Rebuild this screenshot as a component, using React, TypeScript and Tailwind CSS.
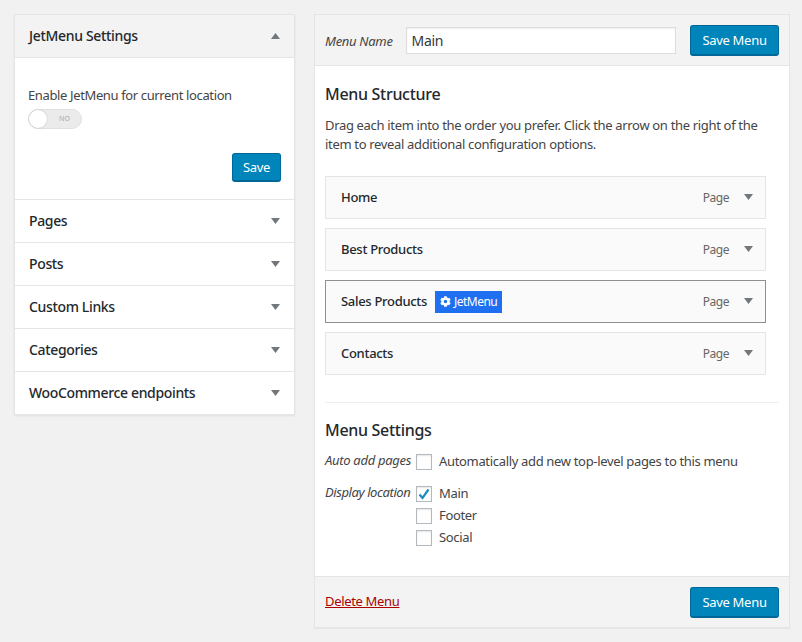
import { FaCog } from "react-icons/fa";

const FONT = "font-['Noto_Sans','Open_Sans',sans-serif]";

function Caret({ up }: { up?: boolean }) {
  return (
    <svg width="9" height="6" viewBox="0 0 9 6" className="shrink-0 fill-[#72777c]">
      <path d={up ? "M4.5 0 9 6H0Z" : "M0 0H9L4.5 6Z"} />
    </svg>
  );
}

function SaveButton({ label, className }: { label: string; className: string }) {
  return (
    <button
      type="button"
      className={`rounded-[3px] border border-b-2 border-[#006799] bg-[#0085ba] pt-[1px] text-[13px] leading-none tracking-[-0.3px] text-white ${className}`}
    >
      {label}
    </button>
  );
}

function SideRow({ label }: { label: string }) {
  return (
    <div className="flex h-[43px] items-center justify-between border-t border-[#e5e5e5] pl-[14px] pr-[14px]">
      <span className="-translate-y-px text-[14px] font-medium tracking-[-0.35px] text-[#23282d]">{label}</span>
      <Caret />
    </div>
  );
}

function MenuItem({ label, active, badge }: { label: string; active?: boolean; badge?: boolean }) {
  return (
    <div
      className={`flex h-[43px] w-[441px] items-center border bg-[#fafafa] pl-[15px] pr-[12px] ${active ? "border-[#8f8f8f]" : "border-[#e5e5e5]"}`}
    >
      <span className="text-[13px] font-medium tracking-[-0.3px] text-[#23282d]">{label}</span>
      {badge && (
        <span className="ml-[8px] flex h-[22px] w-[67px] items-center justify-center gap-[3px] bg-[#1f70f0] text-[12px] tracking-[-0.5px] text-white">
          <FaCog size={11} />
          JetMenu
        </span>
      )}
      <span className="ml-auto mr-[15px] text-[12px] tracking-[-0.45px] text-[#666]">Page</span>
      <span className="-mt-[2px]">
        <Caret />
      </span>
    </div>
  );
}

function Check({ checked }: { checked?: boolean }) {
  return (
    <span className="flex h-[16px] w-[16px] shrink-0 items-center justify-center border border-[#b4b9be] bg-white shadow-[inset_0_1px_2px_rgba(0,0,0,0.1)]">
      {checked && (
        <svg width="14" height="14" viewBox="0 0 14 14" className="fill-none stroke-[#1e8cbe] stroke-[2.2]">
          <path d="M2.5 7.5 5.5 11 11.5 2.5" />
        </svg>
      )}
    </span>
  );
}

function CheckRow({ label, checked }: { label: string; checked?: boolean }) {
  return (
    <div className="flex h-[22px] items-center gap-[7px] text-[13px] tracking-[-0.33px] text-[#444]">
      <Check checked={checked} />
      <span>{label}</span>
    </div>
  );
}

export default function App() {
  return (
    <div className={`flex min-h-[642px] w-[802px] items-start gap-[19px] overflow-hidden bg-[#f1f1f1] pl-[14px] pt-[14px] ${FONT}`}>
      {/* left column: accordion of menu item sources */}
      <div className="w-[281px] border border-[#e5e5e5] bg-white shadow-[0_1px_2px_rgba(0,0,0,0.08)]">
        <div className="flex h-[42px] items-center justify-between bg-[#f3f3f3] pl-[14px] pr-[14px]">
          <span className="-translate-y-px text-[14px] font-medium tracking-[-0.33px] text-[#23282d]">JetMenu Settings</span>
          <Caret up />
        </div>
        <div className="flex h-[142px] flex-col border-t border-[#e5e5e5] px-[13px] pt-[28px]">
          <span className="text-[13px] leading-[18px] tracking-[-0.37px] text-[#444]">Enable JetMenu for current location</span>
          <div className="mt-[5px] flex h-[20px] w-[54px] items-center justify-between rounded-full border border-[#e0e0e0] bg-[#ebebeb] pr-[11px]">
            <span className="h-[18px] w-[18px] rounded-full bg-white shadow-[0_0_2px_rgba(0,0,0,0.2)]" />
            <span className="text-[7px] font-medium text-[#b0b5b8]">NO</span>
          </div>
          <div className="mt-[24px] flex justify-end">
            <SaveButton label="Save" className="h-[29px] w-[49px]" />
          </div>
        </div>
        <SideRow label="Pages" />
        <SideRow label="Posts" />
        <SideRow label="Custom Links" />
        <SideRow label="Categories" />
        <SideRow label="WooCommerce endpoints" />
      </div>

      {/* right column: menu editor */}
      <div className="flex h-[614px] w-[476px] flex-col border border-[#e5e5e5] bg-white shadow-[0_1px_1px_rgba(0,0,0,0.04)]">
        <div className="flex h-[51px] shrink-0 items-center border-b border-[#e5e5e5] bg-[#f3f3f3] px-[10px]">
          <span className="translate-y-[2px] text-[13px] italic tracking-[-0.3px] text-[#444]">Menu Name</span>
          <div className="ml-[13px] flex h-[27px] w-[270px] items-center border border-[#ddd] bg-white pl-[5px] text-[14px] tracking-[-0.3px] text-[#32373c] shadow-[inset_0_1px_2px_rgba(0,0,0,0.07)]">
            Main
          </div>
          <SaveButton label="Save Menu" className="ml-auto h-[31px] w-[89px]" />
        </div>

        <div className="flex-1 px-[10px] pt-[17px]">
          <h3 className="text-[16px] font-medium leading-[22px] tracking-[-0.3px] text-[#23282d]">Menu Structure</h3>
          <p className="mt-[11px] text-[13px] leading-[19px] tracking-[-0.33px] text-[#444]">
            Drag each item into the order you prefer. Click the arrow on the right of the
            <br />
            item to reveal additional configuration options.
          </p>
          <div className="mt-[22px] flex flex-col gap-[9px]">
            <MenuItem label="Home" />
            <MenuItem label="Best Products" />
            <MenuItem label="Sales Products" active badge />
            <MenuItem label="Contacts" />
          </div>
          <div className="mt-[27px] border-t border-[#eee] pt-[16px]">
            <h3 className="text-[16px] font-medium leading-[22px] tracking-[-0.3px] text-[#23282d]">Menu Settings</h3>
            <div className="mt-[10px] flex h-[22px] items-center">
              <span className="w-[91px] -translate-y-px text-[13px] italic tracking-[-0.3px] text-[#444]">Auto add pages</span>
              <CheckRow label="Automatically add new top-level pages to this menu" />
            </div>
            <div className="mt-[10px] flex items-start">
              <span className="w-[91px] -translate-y-[2px] text-[13px] italic leading-[22px] tracking-[-0.4px] text-[#444]">Display location</span>
              <div className="flex flex-col">
                <CheckRow label="Main" checked />
                <CheckRow label="Footer" />
                <CheckRow label="Social" />
              </div>
            </div>
          </div>
        </div>

        <div className="flex h-[51px] shrink-0 items-center justify-between border-t border-[#e5e5e5] bg-[#f3f3f3] px-[10px]">
          <a href="#" className="text-[13px] tracking-[-0.33px] text-[#a00] underline">
            Delete Menu
          </a>
          <SaveButton label="Save Menu" className="h-[31px] w-[89px]" />
        </div>
      </div>
    </div>
  );
}
